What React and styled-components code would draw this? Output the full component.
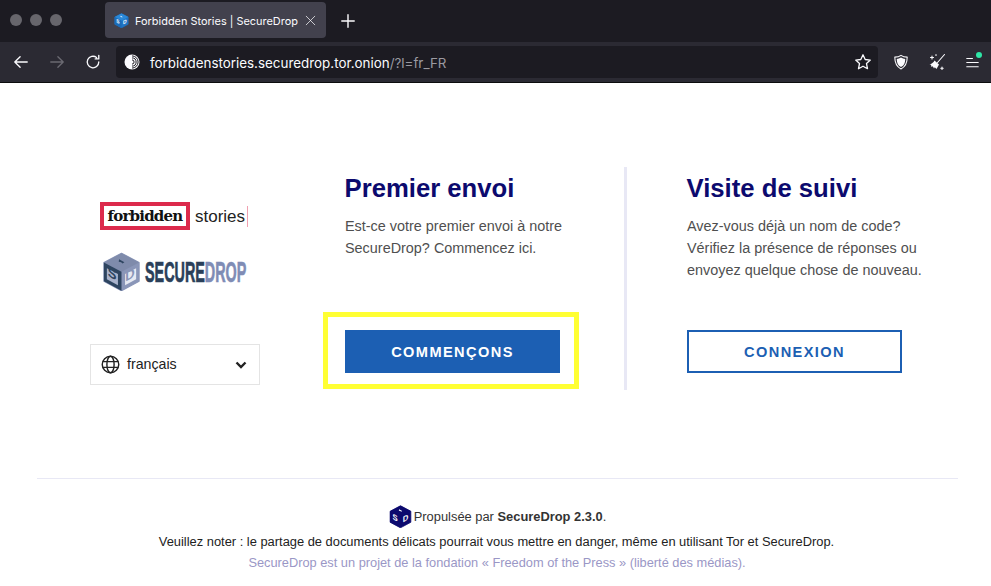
import React from "react";
import styled, { createGlobalStyle } from "styled-components";

const Global = createGlobalStyle`
  html, body { margin: 0; padding: 0; background: #fff; }
  body { font-family: "Liberation Sans", Arial, sans-serif; width: 991px; height: 586px; overflow: hidden; }
  * { box-sizing: border-box; }
`;

const TabStrip = styled.div`
  height: 42px; background: #1c1b22; display: flex; align-items: center; padding-left: 10px;
`;
const Dots = styled.div`display: flex; gap: 8px; width: 95px; margin-top: -2px;`;
const Dot = styled.span`width: 12px; height: 12px; border-radius: 50%; background: #67666c;`;
const Tab = styled.div`
  width: 221px; height: 36px; margin-top: -2px; background: #42414d; border-radius: 4px;
  display: flex; align-items: center; padding-left: 9px; color: #fbfbfe;
  font: 400 10.95px "Inter", "Liberation Sans", sans-serif;
`;
const TabTitle = styled.span`margin: 1px 0 0 6px; width: 170px; white-space: nowrap;`;
const NewTab = styled.div`margin-left: 15px; margin-top: -1px; display: flex;`;

const Toolbar = styled.div`
  height: 41px; background: #2b2a33; border-bottom: 1px solid #0c0c0d; display: flex; align-items: center;
`;
const NavGroup = styled.div`display: flex; align-items: center; gap: 20px; padding-left: 13px; width: 116px;`;
const UrlBar = styled.div`
  width: 762px; height: 32px; background: #1c1b22; border-radius: 4px; display: flex; align-items: center; padding: 0 6px 0 8px;
  font: 400 13.4px "Inter", "Liberation Sans", sans-serif; color: #fbfbfe;
`;
const UrlText = styled.span`margin: 1px 0 0 10px; flex: 1; white-space: nowrap;`;
const UrlFaint = styled.span`color: #9b9aa1;`;
const RightIcons = styled.div`display: flex; align-items: center; flex: 1; gap: 19px; padding-left: 15px;`;
const MenuWrap = styled.div`position: relative; display: flex; margin-left: 1px;`;
const MenuBadge = styled.span`position: absolute; top: -4px; right: -3px; width: 6px; height: 6px; border-radius: 50%; background: #2ee6a6;`;

const Main = styled.main`
  display: flex; align-items: flex-start; padding: 84px 0 0 90px; height: 395px;
`;
const LogoCol = styled.div`width: 170px; display: flex; flex-direction: column; margin-right: 85px;`;
const FsLogo = styled.div`display: flex; align-items: center; margin: 35px 0 0 10px; height: 28px;`;
const FsBox = styled.span`
  height: 28px; width: 90px; flex: none; border: 4px solid #dc2a4c; display: flex; align-items: center; justify-content: center;
  font: 700 15px "DejaVu Serif", "Liberation Serif", serif; letter-spacing: -0.8px; color: #111;
`;
const FsStories = styled.span`
  margin-left: 5px; font: 400 17px "Liberation Sans", sans-serif; color: #222; border-right: 1px solid #f0a0b0; height: 21px; line-height: 21px; padding-right: 2px; white-space: nowrap; flex: none;
`;
const SdLogo = styled.div`display: flex; align-items: center; margin: 20px 0 0 12px; height: 42px;`;
const SdWord = styled.span`
  display: inline-block; margin: 2px 0 0 4px; font: 700 29px "Liberation Sans", sans-serif; color: #2a3f59; -webkit-text-stroke: 0.7px currentColor; transform: scaleX(0.495); transform-origin: left center; white-space: nowrap;
`;
const SdWordLight = styled.span`color: #7f8cb5;`;
const LangSelect = styled.div`
  margin-top: 52px; width: 170px; height: 41px; border: 1px solid #e4e4e4; display: flex; align-items: center; padding: 0 12px 0 10px;
  font-size: 14.2px; color: #222;
`;
const LangLabel = styled.span`margin: 0 0 1px 7px; flex: 1;`;

const Col = styled.section`width: 215px; height: 223px; flex: none; display: flex; flex-direction: column;`;
const Heading = styled.h2`margin: 6px 0 0 -0.5px; font-size: 25.7px; line-height: 30px; font-weight: 700; color: #0c0a6e; white-space: nowrap;`;
const Text = styled.p`margin: 12px 0 0; font-size: 14.42px; line-height: 22px; color: #4f4f4f; white-space: nowrap; flex: 1;`;
const BtnWrap = styled.div`position: relative; margin-bottom: 17px;`;
const Focus = styled.span`position: absolute; top: -18px; bottom: -16px; left: -22px; right: -19px; border: 5px solid #ffff33;`;
const Button = styled.a`
  display: flex; align-items: center; justify-content: center; height: 43px; font-size: 14.6px; font-weight: 700; letter-spacing: 1.4px;
  background: ${p => (p.$primary ? "#1c5fb3" : "#fff")}; color: ${p => (p.$primary ? "#fff" : "#1c5fb3")}; border: 2px solid #1c5fb3;
`;
const Divider = styled.div`width: 3px; height: 223px; background: #e8e8f5; margin: 0 60px 0 64px; flex: none;`;

const Footer = styled.footer`
  margin: 0 33px 0 37px; border-top: 1px solid #e8e8f5; padding-top: 25px; text-align: center; font-size: 12.88px; color: #333;
`;
const Powered = styled.div`display: flex; justify-content: center; align-items: center; height: 24px;`;
const PoweredText = styled.span`margin-left: 2px;`;
const Note = styled.p`margin: 6px 0 0; padding-right: 2px; line-height: 16px; color: #222;`;
const Fpf = styled.p`margin: 5px 0 0; padding-right: 1px; line-height: 16px; font-size: 12.8px; color: #9a97c6;`;

const Cube = ({ size, top, left, right, mark, plate, rplate, rmark }) => (
  <svg width={size} height={size} viewBox="0 0 24 24" style={{ flex: "none" }}>
    <path d="M12 .8 22.800 6.500V18L12 23.800 1.200 18V6.500Z" fill={right} stroke={right} strokeWidth=".8" strokeLinejoin="round" />
    <path d="M12 .8 22.800 6.500 12 12.200 1.200 6.500Z" fill={top} />
    <path d="M1.200 6.500 12 12.200V23.800L1.200 18Z" fill={left} />
    {plate && <path d="M3 10 9.800 13.600V20.400L3 16.800Z" fill={plate} />}
    {rplate && <path d="M14.200 13.600 21 10V16.800L14.200 20.400Z" fill={rplate} />}
    <text transform="matrix(.95 .5 0 1 3.600 14.700)" fontSize="8.500" fontWeight="700" fontFamily="Liberation Sans" fill={mark}>S</text>
    <text transform="matrix(.95 -.5 0 1 14.300 18.300)" fontSize="8.500" fontWeight="700" fontFamily="Liberation Sans" fill={rmark || mark}>D</text>
    <path d="M10.500 4.500 13.800 6.300 12.600 7 11.800 6.300 10.300 6Z" fill={mark} />
  </svg>
);

const Stroke = ({ w = 18, h = 18, c = "#fbfbfe", sw = 1.5, children }) => (
  <svg width={w} height={h} viewBox="0 0 18 18" fill="none" stroke={c} strokeWidth={sw} strokeLinecap="round" strokeLinejoin="round" style={{ flex: "none" }}>{children}</svg>
);

export default function App() {
  return (
    <>
      <Global />
      <TabStrip>
        <Dots><Dot /><Dot /><Dot /></Dots>
        <Tab>
          <Cube size={15} top="#2a88d8" left="#1b6bb8" right="#1f74c4" mark="#fff" />
          <TabTitle>Forbidden Stories | SecureDrop</TabTitle>
          <Stroke w={11} h={11} sw={1.2}><path d="M2 2 16 16M16 2 2 16" /></Stroke>
        </Tab>
        <NewTab><Stroke w={14} h={14} sw={1.8}><path d="M9 1V17M1 9H17" /></Stroke></NewTab>
      </TabStrip>
      <Toolbar>
        <NavGroup>
          <Stroke w={16} h={16}><path d="M2 9H16M8 3 2 9 8 15" /></Stroke>
          <Stroke w={16} h={16} c="#6b6a72"><path d="M2 9H16M10 3 16 9 10 15" /></Stroke>
          <Stroke w={16} h={16}><path d="M15.500 9A6.500 6.500 0 1 1 13 3.900M15.500 1.500V5.500H11.500" /></Stroke>
        </NavGroup>
        <UrlBar>
          <svg width="16" height="16" viewBox="0 0 16 16" style={{ flex: "none" }}>
            <circle cx="8" cy="8" r="7.500" fill="#fbfbfe" />
            <path d="M8 1.900A6.100 6.100 0 0 1 8 14.100M8 3.900A4.100 4.100 0 0 1 8 12.100M8 5.900A2.100 2.100 0 0 1 8 10.100" fill="none" stroke="#1c1b22" strokeWidth="1" />
          </svg>
          <UrlText>forbiddenstories.securedrop.tor.onion<UrlFaint>/?l=fr_FR</UrlFaint></UrlText>
          <Stroke w={18} h={18} sw={1.3}><path d="M9 1.800 11.200 6.500 16.300 7.100 12.500 10.600 13.500 15.700 9 13.200 4.500 15.700 5.500 10.600 1.700 7.100 6.800 6.500Z" /></Stroke>
        </UrlBar>
        <RightIcons>
          <Stroke w={16} h={16} sw={1.2}>
            <path d="M9 1.500C11 3 13.500 3.500 16 3.500 16 10 14 14.500 9 16.800 4 14.500 2 10 2 3.500 4.500 3.500 7 3 9 1.500Z" />
            <path d="M9 4C10.500 5 12 5.400 13.800 5.500 13.700 10 12.500 12.800 9 14.500 5.500 12.800 4.300 10 4.200 5.500 6 5.400 7.500 5 9 4Z" fill="#fbfbfe" stroke="none" />
          </Stroke>
          <Stroke w={18} h={18} sw={1.1}>
            <path d="M16.500 1.500 9.500 9.500" />
            <path d="M6.500 7.500 11 11.500 8.500 16 6.800 14.300 6 15.500 4.800 13.300 3.500 14 3 11.800 1.500 11.500C3.500 11 5.500 9.500 6.500 7.500Z" fill="#fbfbfe" stroke="none" />
            <path d="M4 3V6M2.500 4.500H5.500M14 14V16.500M12.800 15.200H15.200M8 1.500V2.500" />
          </Stroke>
          <MenuWrap>
            <Stroke w={13} h={13} sw={1.4}><path d="M1 3.500H9M1 9H17M1 15H17" /></Stroke>
            <MenuBadge />
          </MenuWrap>
        </RightIcons>
      </Toolbar>
      <Main>
        <LogoCol>
          <FsLogo>
            <FsBox>forbidden</FsBox>
            <FsStories>stories</FsStories>
          </FsLogo>
          <SdLogo>
            <Cube size={39} top="#7f8bab" left="#2e4560" right="#8a96b8" mark="#2e4560" rmark="#8a96b8" plate="#a9b3cc" rplate="#e6e9f2" />
            <SdWord>SECURE<SdWordLight>DROP</SdWordLight></SdWord>
          </SdLogo>
          <LangSelect>
            <svg width="19" height="19" viewBox="0 0 20 20" fill="none" stroke="#222" strokeWidth="1.500" style={{ flex: "none" }}>
              <circle cx="10" cy="10" r="8.700" />
              <ellipse cx="10" cy="10" rx="3.800" ry="8.700" />
              <path d="M1.800 7H18.200M1.800 13H18.200" />
            </svg>
            <LangLabel>français</LangLabel>
            <svg width="12" height="8" viewBox="0 0 12 8" fill="none" stroke="#222" strokeWidth="2.400" style={{ flex: "none" }}>
              <path d="M1.500 1.500 6 6 10.500 1.500" />
            </svg>
          </LangSelect>
        </LogoCol>
        <Col>
          <Heading>Premier envoi</Heading>
          <Text>Est-ce votre premier envoi à notre<br />SecureDrop? Commencez ici.</Text>
          <BtnWrap>
            <Button $primary>COMMENÇONS</Button>
            <Focus />
          </BtnWrap>
        </Col>
        <Divider />
        <Col>
          <Heading>Visite de suivi</Heading>
          <Text>Avez-vous déjà un nom de code?<br />Vérifiez la présence de réponses ou<br />envoyez quelque chose de nouveau.</Text>
          <BtnWrap><Button>CONNEXION</Button></BtnWrap>
        </Col>
      </Main>
      <Footer>
        <Powered>
          <Cube size={23} top="#0c0a6e" left="#0c0a6e" right="#0c0a6e" mark="#fff" />
          <PoweredText>Propulsée par <b>SecureDrop 2.3.0</b>.</PoweredText>
        </Powered>
        <Note>Veuillez noter : le partage de documents délicats pourrait vous mettre en danger, même en utilisant Tor et SecureDrop.</Note>
        <Fpf>SecureDrop est un projet de la fondation « Freedom of the Press » (liberté des médias).</Fpf>
      </Footer>
    </>
  );
}
